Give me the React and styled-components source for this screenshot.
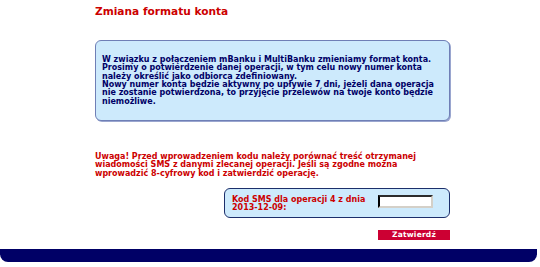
import React from "react";
import styled, { createGlobalStyle } from "styled-components";

const Global = createGlobalStyle`
  html, body { margin: 0; padding: 0; background: #ffffff; }
  body { font-family: "DejaVu Sans", Verdana, sans-serif; }
`;

const Page = styled.div`
  width: 540px;
  height: 267px;
  display: flex;
  flex-direction: column;
  overflow: hidden;
`;

const Content = styled.div`
  width: 355px;
  margin-left: 95px;
  display: flex;
  flex-direction: column;
`;

const Title = styled.h1`
  margin: 0;
  padding-top: 4.5px;
  font-size: 10.6px;
  line-height: 13px;
  font-weight: bold;
  color: #cc0000;
`;

const InfoBox = styled.div`
  box-sizing: border-box;
  margin-top: 22.5px;
  height: 81px;
  padding: 15px 6px 0 6px;
  background: #cdeafc;
  border: 1px solid #6f7fb6;
  border-radius: 6px;
  box-shadow: 1px 1px 0 #9aa6cf;
`;

const Text = styled.p`
  margin: 0;
  font-size: 8px;
  line-height: 8.33px;
  font-weight: bold;
  color: ${(p) => p.$color};
`;

const Warning = styled(Text)`
  margin-top: 32px;
`;

const SmsBox = styled.div`
  box-sizing: border-box;
  align-self: flex-end;
  width: 226px;
  height: 30px;
  margin-top: 10px;
  padding: 7px 16px 0 7px;
  display: flex;
  justify-content: space-between;
  align-items: flex-start;
  background: #cdeafc;
  border: 1px solid #1c2f6b;
  border-radius: 6px;
`;

const Label = styled(Text)`
  width: 140px;
`;

const CodeInput = styled.input`
  box-sizing: border-box;
  width: 55px;
  height: 13px;
  margin: -1px 0 0 0;
  padding: 0;
  border: 2px inset #d4d0c8;
  border-top-color: #808080;
  border-left-color: #404040;
  background: #ffffff;
  outline: none;
`;

const SubmitButton = styled.button`
  align-self: flex-end;
  box-sizing: border-box;
  width: 72px;
  height: 10px;
  margin-top: 12px;
  padding: 0;
  border: none;
  background: #cc0033;
  color: #ffffff;
  font-family: "DejaVu Sans", Verdana, sans-serif;
  font-size: 7.5px;
  line-height: 10px;
  font-weight: bold;
  letter-spacing: 0.2px;
  cursor: pointer;
`;

const FooterBar = styled.div`
  width: 537px;
  height: 13px;
  margin-top: 9px;
  background: #000066;
  border-radius: 0 0 8px 8px;
`;

export default function App() {
  return (
    <>
      <Global />
      <Page>
        <Content>
          <Title>Zmiana formatu konta</Title>
          <InfoBox>
            <Text $color="#000066">
              W związku z połączeniem mBanku i MultiBanku zmieniamy format konta.
              <br />
              Prosimy o potwierdzenie danej operacji, w tym celu nowy numer konta
              <br />
              należy określić jako odbiorca zdefiniowany.
              <br />
              Nowy numer konta będzie aktywny po upływie 7 dni, jeżeli dana operacja
              <br />
              nie zostanie potwierdzona, to przyjęcie przelewów na twoje konto będzie
              <br />
              niemożliwe.
            </Text>
          </InfoBox>
          <Warning $color="#cc0000">
            Uwaga! Przed wprowadzeniem kodu należy porównać treść otrzymanej
            <br />
            wiadomości SMS z danymi zlecanej operacji. Jeśli są zgodne można
            <br />
            wprowadzić 8-cyfrowy kod i zatwierdzić operację.
          </Warning>
          <SmsBox>
            <Label $color="#cc0000">Kod SMS dla operacji 4 z dnia 2013-12-09:</Label>
            <CodeInput type="text" />
          </SmsBox>
          <SubmitButton type="button">Zatwierdź</SubmitButton>
        </Content>
        <FooterBar />
      </Page>
    </>
  );
}
